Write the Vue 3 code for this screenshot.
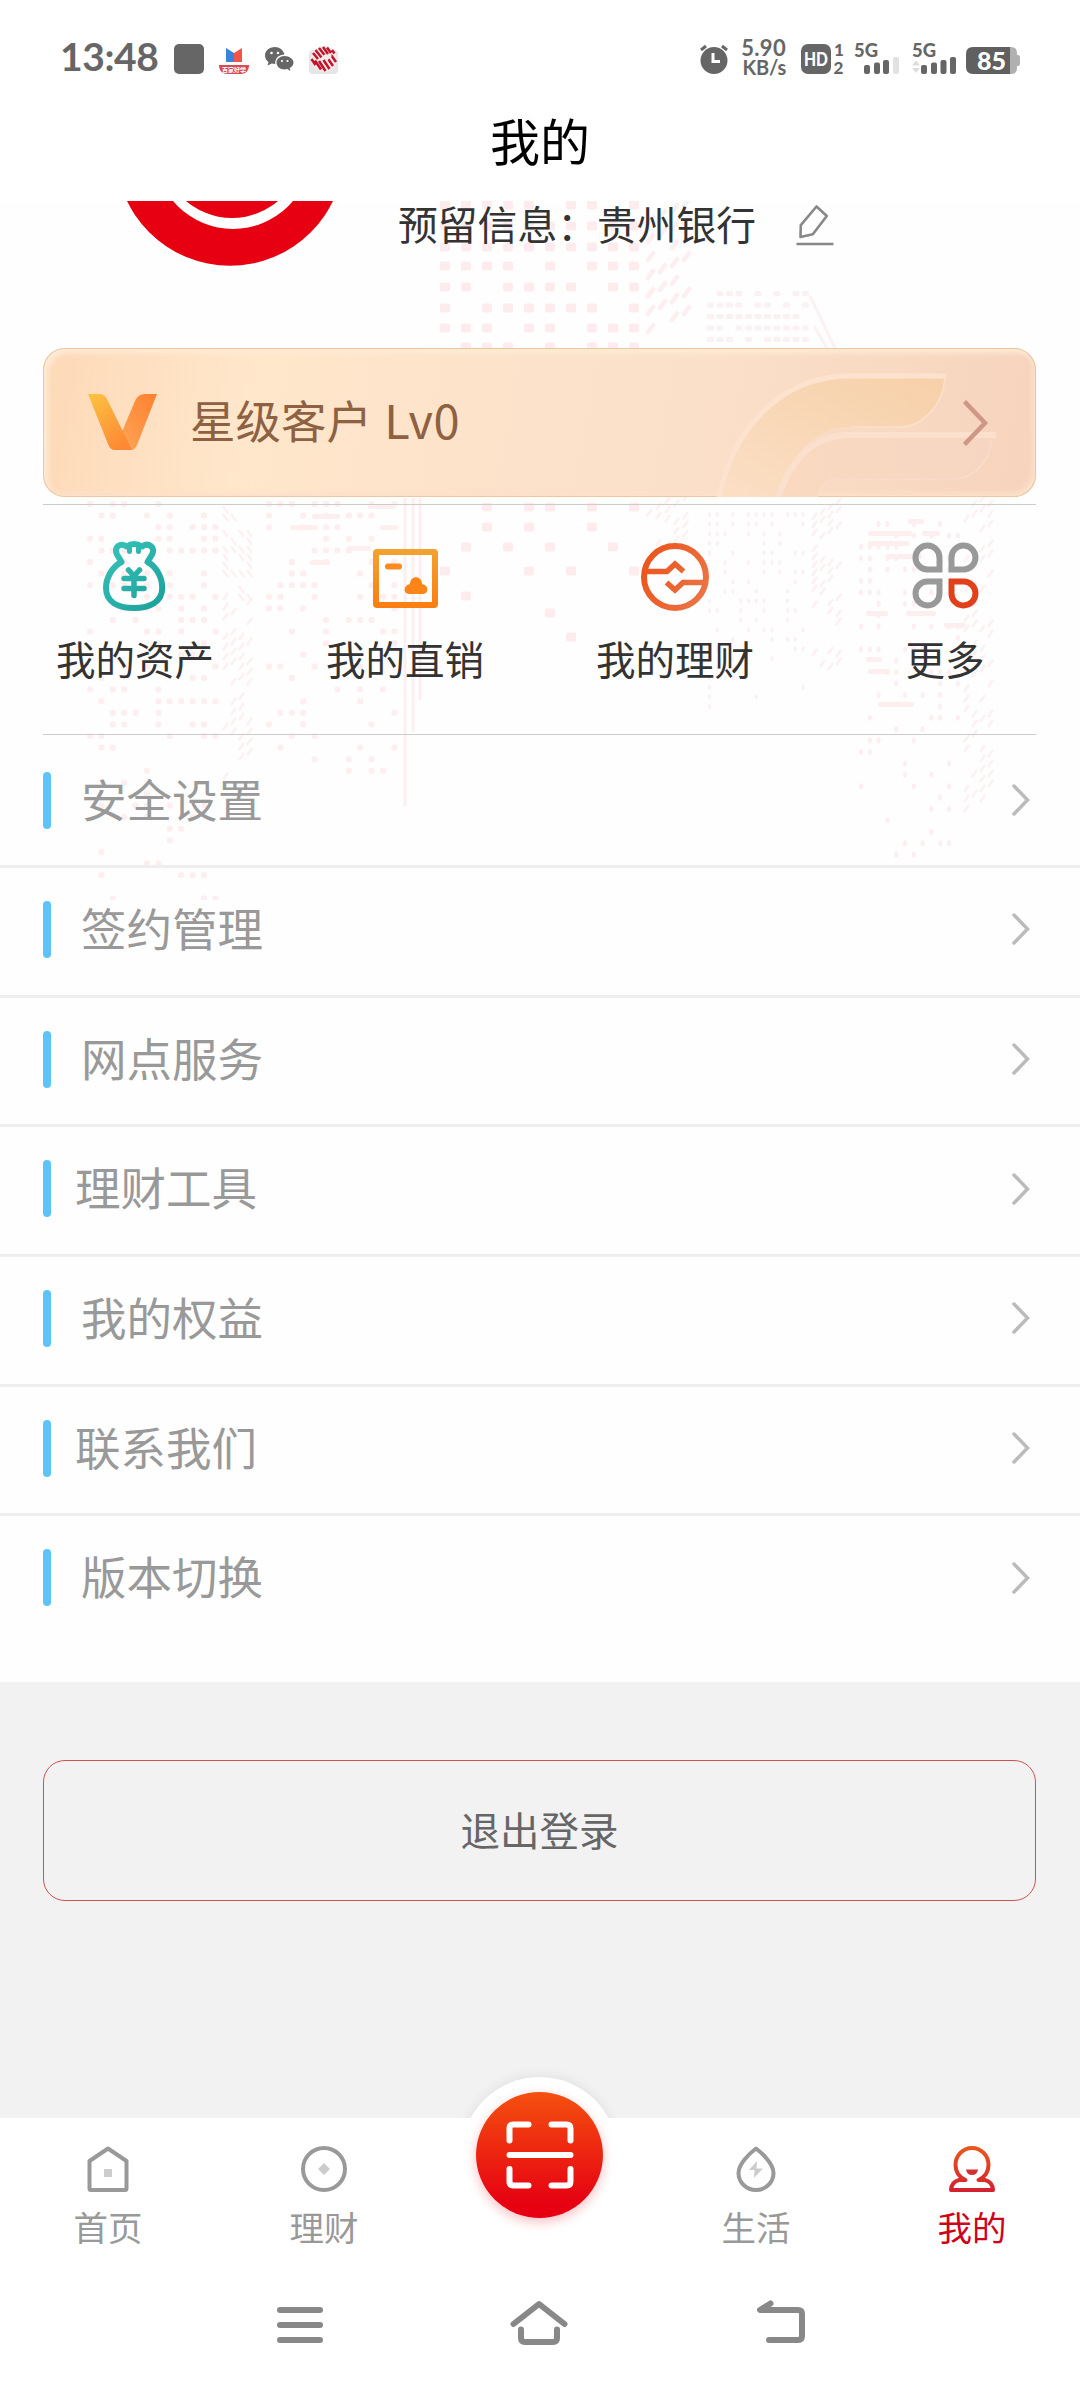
<script setup>
const quick = [
  { key: 'asset', label: '我的资产' },
  { key: 'direct', label: '我的直销' },
  { key: 'wealth', label: '我的理财' },
  { key: 'more', label: '更多' },
]

const menu = [
  { label: '安全设置' },
  { label: '签约管理' },
  { label: '网点服务' },
  { label: '理财工具', tight: true },
  { label: '我的权益' },
  { label: '联系我们', tight: true },
  { label: '版本切换' },
]

const tabs = [
  { key: 'home', label: '首页' },
  { key: 'finance', label: '理财' },
  { key: 'scan', label: '' },
  { key: 'life', label: '生活' },
  { key: 'mine', label: '我的', active: true },
]

// Dotted skyline behind the upper half of the page
let seed = 7
function rnd() {
  seed = (seed * 16807) % 2147483647
  return seed / 2147483647
}

const tower = [
  [205, '1111101101'], [226, '1111111111'], [247, '1111111111'], [266, '1111010111'],
  [287, '1101111011'], [308, '1011111101'], [328, '1110110111'], [347, '0111010111'],
  [507, '0010110101'], [527, '0010100100'], [547, '0101010010'], [571, '1000101001'],
  [596, '0100000000'], [613, '0000010000'], [637, '0000001000'],
]
const bigDots = tower.flatMap(([y, row]) =>
  [...row].map((c, i) => (c === '1' ? { x: 440 + i * 21, y: y - 4.5 } : null)).filter(Boolean))

function grid(x0, x1, dx, y0, y1, dy, top, bottom, w, h) {
  const out = []
  for (let y = y0; y <= y1; y += dy) {
    const p = top + (bottom - top) * ((y - y0) / (y1 - y0))
    for (let x = x0; x <= x1; x += dx) if (rnd() < p) out.push({ x, y, w, h })
  }
  return out
}
const smallDots = [
  ...grid(87, 215, 11.4, 501, 900, 11.6, 0.48, 0.08, 6, 6),
  ...grid(266, 396, 11.4, 501, 812, 11.6, 0.48, 0.06, 6, 6),
  ...grid(859, 958, 8.8, 521, 855, 11.4, 0.42, 0.1, 4, 6),
]
const fineDots = [
  ...grid(707, 803, 9.5, 291, 346, 11.5, 0.8, 0.8, 7, 5),
  ...grid(708, 803, 7.8, 512, 708, 9.6, 0.65, 0.08, 3, 5),
]
const dashes = [
  [312, 514, 28], [290, 525, 28], [347, 546, 24], [310, 560, 20], [368, 504, 28], [380, 525, 18],
  [868, 531, 44], [922, 531, 18], [868, 541, 42], [886, 554, 36], [908, 519, 16], [866, 611, 22],
  [906, 611, 30], [944, 623, 22], [866, 657, 16], [868, 669, 22], [878, 702, 36],
]

function slants(x0, x1, dx, y0, y1, dy, rise, p0, p1) {
  const out = []
  for (let y = y0; y <= y1; y += dy) {
    const p = p0 + (p1 - p0) * ((y - y0) / (y1 - y0))
    for (let x = x0; x <= x1; x += dx) {
      if (rnd() < p) {
        const yy = y + ((x - x0) / dx) * rise
        out.push(`M${x} ${yy}l5 ${rise < 0 ? -7 : 7}`)
      }
    }
  }
  return out.join('')
}
const thickSlants = slants(648, 690, 12, 224, 340, 18, -6, 0.75, 0.75)
const thinSlants =
  slants(647, 690, 9, 516, 562, 9, -6, 0.8, 0.6) +
  slants(223, 250, 8, 506, 590, 8, 8, 0.6, 0.4) + slants(223, 250, 8, 600, 780, 10, -5, 0.6, 0.5) +
  slants(812, 838, 8, 520, 680, 8, -5, 0.7, 0.4) + slants(964, 988, 8, 512, 815, 10, -5, 0.6, 0.5)
</script>

<template>
  <div class="page">
    <svg class="skyline" width="1080" height="900" viewBox="0 0 1080 900" aria-hidden="true">
      <g fill="#fdebed">
        <rect v-for="(d, i) in bigDots" :key="'b' + i" :x="d.x" :y="d.y" width="10" height="9" rx="2" />
      </g>
      <g fill="#fdeff0">
        <rect v-for="(d, i) in smallDots" :key="'s' + i" :x="d.x" :y="d.y" :width="d.w" :height="d.h" rx="2" />
        <rect v-for="(d, i) in dashes" :key="'d' + i" :x="d[0]" :y="d[1]" :width="d[2]" height="5" rx="2" />
      </g>
      <g fill="#fcf1f2">
        <rect v-for="(d, i) in fineDots" :key="'f' + i" :x="d.x" :y="d.y" :width="d.w" :height="d.h" rx="1.5" />
      </g>
      <path :d="thickSlants" stroke="#fdeef0" stroke-width="4.500" stroke-linecap="round" />
      <path :d="thinSlants" stroke="#fdf0f1" stroke-width="2.400" />
      <path d="M810 296l26 54M814 326l14 24" stroke="#fdf2f3" stroke-width="3" />
      <path d="M405 498V806M413 498V732M420 498V700" stroke="#fdeef0" stroke-width="3" />
    </svg>

    <header class="status">
      <span class="clock">13:48</span>
      <i class="square"></i>
      <svg class="s-news" width="30" height="28" viewBox="0 0 30 28">
        <path d="M7 1l8 5v9H7z" fill="#3b82dc" /><path d="M23 1l-8 5v9h8z" fill="#f25447" />
        <path d="M0 18h30c0 5-3 9-8 9H8c-5 0-8-4-8-9z" fill="#d9494d" />
        <text x="15" y="25" text-anchor="middle" font-size="6" font-weight="700" fill="#fff">百家好学</text>
      </svg>
      <svg class="s-chat" width="29" height="25" viewBox="0 0 29 25" fill="#666">
        <path d="M10 0C4 0 0 4 0 8.500c0 3 1.500 5 3.500 6.500L2.500 18.500l4.300-2 3.400.5C10 11 14 7.500 19.500 7.500 18.500 3 14.500 0 10 0z" />
        <path d="M19.500 9C15 9 11.500 12 11.500 15.700s3.500 6.700 8 6.700l2.700-.4 3.300 2-.8-3C27 19.600 28.500 18 28.500 15.700 28.500 12 24.500 9 19.500 9z" />
        <g fill="#fff"><circle cx="6.500" cy="6" r="1.300" /><circle cx="13" cy="6" r="1.300" /><circle cx="17" cy="14" r="1.100" /><circle cx="22.500" cy="14" r="1.100" /></g>
      </svg>
      <svg class="s-bank" width="30" height="28" viewBox="0 0 30 28">
        <rect y="4" width="29" height="24" rx="4" fill="#e6e6e8" />
        <circle cx="15" cy="13" r="13" fill="#f4e9ea" />
        <g stroke="#c0152b" stroke-width="2.500" fill="none">
          <path d="M4 7l5 6M6.500 4l6 7.500M10 2l5.500 7M14 1l5 7M18 1.500l4 5.500M23 4l2.500 3.500" />
          <path d="M2.500 13l4 6M6 14.500l6 9M10 15l6.500 10M14.500 14l6 9M18.500 12l5.500 8M22 9l5 7" />
        </g>
        <path d="M12 14l4-4 2 3 4-4" stroke="#f4e9ea" stroke-width="2.500" fill="none" />
      </svg>

      <svg class="s-alarm" width="30" height="30" viewBox="0 0 30 30">
        <circle cx="15" cy="16.500" r="13.500" fill="#666" />
        <path d="M2 6l5-4M28 6l-5-4" stroke="#666" stroke-width="3" />
        <path d="M14 9v8.500h7" stroke="#fff" stroke-width="3" fill="none" />
      </svg>
      <div class="speed"><span class="num">5.90</span><span class="unit">KB/s</span></div>
      <svg class="s-hd" width="44" height="32" viewBox="0 0 44 32" fill="#666">
        <rect y="1" width="30" height="30" rx="7" />
        <text x="15" y="22.500" text-anchor="middle" font-size="18.500" font-weight="900" fill="#fff" textLength="24" lengthAdjust="spacingAndGlyphs">HD</text>
        <text x="38" y="13" text-anchor="middle" font-size="17" font-weight="900">1</text>
        <text x="37.500" y="30.500" text-anchor="middle" font-size="17" font-weight="900">2</text>
      </svg>
      <svg class="s-sig1" width="46" height="32" viewBox="0 0 46 32" fill="#666">
        <text x="0" y="15" font-size="18" font-weight="900" textLength="24" lengthAdjust="spacingAndGlyphs">5G</text>
        <rect x="10" y="23" width="6" height="9" rx="2" /><rect x="20" y="20.500" width="6" height="11.500" rx="2" />
        <rect x="29" y="18" width="6" height="14" rx="2" /><rect x="39" y="15" width="6" height="17" rx="2" fill="#e2e2e2" />
      </svg>
      <svg class="s-sig2" width="46" height="32" viewBox="0 0 46 32" fill="#666">
        <text x="0" y="15" font-size="18" font-weight="900" textLength="24" lengthAdjust="spacingAndGlyphs">5G</text>
        <path d="M0 23.500l4-5 4 5zM0 26l4 5 4-5z" fill="#ddd" />
        <rect x="9" y="23" width="6" height="9" rx="2" /><rect x="19" y="20.500" width="6" height="11.500" rx="2" />
        <rect x="28.500" y="18" width="6" height="14" rx="2" /><rect x="38" y="15" width="6" height="17" rx="2" />
      </svg>
      <svg class="s-bat" width="54" height="27" viewBox="0 0 54 27">
        <path d="M40 0h5q6 0 6 6v2h1q2 0 2 2v7q0 2-2 2h-1v2q0 6-6 6h-5z" fill="#b0b0b0" />
        <path d="M7 0h37v27H7q-7 0-7-7V7q0-7 7-7z" fill="#606060" />
        <text x="25.500" y="22.500" text-anchor="middle" font-size="24.500" font-weight="900" fill="#fff" textLength="29" lengthAdjust="spacingAndGlyphs">85</text>
      </svg>
    </header>

    <h1 class="title">我的</h1>

    <section class="profile">
      <svg class="avatar" width="210" height="66" viewBox="125 201 210 66">
        <circle cx="230" cy="151.400" r="114.300" fill="#e60012" />
        <circle cx="233" cy="151" r="78" fill="#fff" />
        <circle cx="232" cy="147.300" r="70.700" fill="#e60012" />
      </svg>
      <span class="reserved">预留信息：贵州银行</span>
      <svg class="pencil" width="38" height="42" viewBox="796 204 38 42" fill="none" stroke="#888" stroke-width="2.600">
        <path d="M816.500 206.500l10.300 9.500-14 18.200-12.300 2.700.3-11.800z" stroke-linejoin="round" />
        <path d="M796.500 244h37" />
      </svg>
    </section>

    <section class="level">
      <svg class="level-art" width="993" height="149" viewBox="43 348 993 149">
        <defs>
          <linearGradient id="bandA" x1="0" y1="1" x2="1" y2="0"><stop offset="0" stop-color="#fbdfc5" /><stop offset="1" stop-color="#f6d0a8" /></linearGradient>
          <linearGradient id="bandB" x1="0" y1="0" x2="1" y2="0"><stop offset="0" stop-color="#fad9c0" /><stop offset="1" stop-color="#f6d6c2" /></linearGradient>
        </defs>
        <path d="M719 498C732 430 780 377 850 377H945C943 405 922 427 901 427H850C812 427 789 457 778 498z" fill="url(#bandA)" />
        <path d="M719 498C732 430 780 376 850 376H946" fill="none" stroke="#fde3cf" stroke-width="5" />
        <path d="M945 378C943 405 922 427 901 427H850" fill="none" stroke="#fbe0ca" stroke-width="1.500" />
        <path d="M778 498C791 458 815 436 850 436H991C990 462 974 479 953 479H836Q822 480 817 498z" fill="url(#bandB)" />
        <path d="M778 498C791 458 815 435 850 435H996" fill="none" stroke="#fce0ce" stroke-width="6" />
        <path d="M991 440C990 462 974 479 953 479H836Q822 480 817 498" fill="none" stroke="#fadccb" stroke-width="1.500" />
      </svg>
      <svg class="vee" width="70" height="58" viewBox="0 0 70 58">
        <defs>
          <linearGradient id="va" x1="0" y1="0" x2=".6" y2="1"><stop offset="0" stop-color="#fbc442" /><stop offset="1" stop-color="#ff8a35" /></linearGradient>
          <linearGradient id="vb" x1="1" y1="0" x2="0" y2="1"><stop offset="0" stop-color="#ff7f2e" /><stop offset="1" stop-color="#fca657" /></linearGradient>
        </defs>
        <path d="M69 0H57Q50 0 47 7L33 40l10 16Q47 56 49 51z" fill="url(#vb)" />
        <path d="M0 0H12Q17 0 20 7L44 56H27Q22 56 20 50z" fill="url(#va)" />
      </svg>
      <span class="level-text">星级客户 <b>Lv0</b></span>
      <svg class="level-arrow" width="26" height="46" viewBox="0 0 26 46" fill="none" stroke="#cf9784" stroke-width="4.500"><path d="M1.500 1.500L22 23 1.500 44.500" /></svg>
    </section>

    <nav class="quick">
      <div v-for="q in quick" :key="q.key" class="quick-item">
        <svg v-if="q.key === 'asset'" width="70" height="72" viewBox="100 541 70 72" fill="none" stroke="url(#teal)" stroke-width="6" stroke-linecap="round" stroke-linejoin="round">
          <defs><linearGradient id="teal" gradientUnits="userSpaceOnUse" x1="103" y1="545" x2="165" y2="611"><stop offset="0" stop-color="#37c3ba" /><stop offset="1" stop-color="#1a9f99" /></linearGradient></defs>
          <path d="M121.500 562L117 554.500C113 547 121 542 126.500 546.500 131 543.500 137 543.500 142 546.500 148 542 156 547 152 554.500L147.500 562C157 567 162.200 578 162.200 588 162.200 602 150 608 134 608S106 602 106 588C106 578 112 567 121.500 562z" />
          <path d="M129.500 548v3.500M138.500 548v3.500" stroke-width="5" />
          <path d="M128.500 570l5.500 6 5.500-6M124 578.500h20M124 588.500h20M134 577v18.500" stroke-width="5.500" />
        </svg>
        <svg v-else-if="q.key === 'direct'" width="70" height="72" viewBox="370 541 70 72">
          <defs><linearGradient id="amber" gradientUnits="userSpaceOnUse" x1="0" y1="549" x2="0" y2="608"><stop offset="0" stop-color="#f2a331" /><stop offset="1" stop-color="#fb7d11" /></linearGradient></defs>
          <rect x="376" y="552" width="59" height="53" rx="1" fill="none" stroke="url(#amber)" stroke-width="6" />
          <rect x="385" y="563.500" width="17" height="6" rx="3" fill="#fa8b20" />
          <path d="M409 594c-6 0-6-9 1-10 0-9 12-9 12 0 7 1 7 10 1 10z" fill="#fc8418" />
        </svg>
        <svg v-else-if="q.key === 'wealth'" width="70" height="72" viewBox="639 541 70 72" fill="none" stroke="url(#orange)" stroke-width="6">
          <defs><linearGradient id="orange" gradientUnits="userSpaceOnUse" x1="645" y1="565" x2="705" y2="595"><stop offset="0" stop-color="#ec561f" /><stop offset="1" stop-color="#eb7445" /></linearGradient></defs>
          <circle cx="674" cy="577" r="31" />
          <path d="M645 571.500h21l8-7.500 8.500 7.500M703 582.500h-21l-8 7.500-8.500-7.500" stroke-width="5.500" />
        </svg>
        <svg v-else width="70" height="72" viewBox="910 541 70 72" fill="none" stroke="#999" stroke-width="6">
          <path d="M939.500 569.500H928A12 12 0 1 1 939.500 558z" />
          <path d="M951.500 569.500H963A12 12 0 1 0 951.500 558z" />
          <path d="M939.500 581.500H928A12 12 0 1 0 939.500 593z" />
          <path d="M951.500 581.500H963A12 12 0 1 1 951.500 593z" stroke="#e2401b" />
        </svg>
        <span>{{ q.label }}</span>
      </div>
    </nav>

    <ul class="menu">
      <li v-for="m in menu" :key="m.label" :class="{ tight: m.tight }">
        <i></i>
        <span>{{ m.label }}</span>
        <svg width="20" height="34" viewBox="0 0 20 34" fill="none" stroke="#bbb" stroke-width="3.500" stroke-linecap="round"><path d="M3 3l13.500 14L3 31" /></svg>
      </li>
    </ul>

    <main class="rest"><button class="logout">退出登录</button></main>

    <footer class="tabs">
      <div class="halo"></div>
      <div v-for="t in tabs" :key="t.key" class="tab" :class="{ active: t.active }">
        <svg v-if="t.key === 'home'" width="50" height="50" viewBox="0 0 50 50" fill="none" stroke="#999" stroke-width="4" stroke-linejoin="round">
          <path d="M25 4.500L43.500 17V44.500Q43.500 46 42 46H8Q6.500 46 6.500 44.500V17z" /><rect x="21" y="25" width="8" height="8" fill="#ccc" stroke="none" />
        </svg>
        <svg v-else-if="t.key === 'finance'" width="50" height="50" viewBox="0 0 50 50">
          <circle cx="25" cy="25" r="21" fill="none" stroke="#999" stroke-width="4" /><path d="M25 19l6 6-6 6-6-6z" fill="#ccc" />
        </svg>
        <svg v-else-if="t.key === 'life'" width="50" height="50" viewBox="0 0 50 50" fill="none" stroke="#999" stroke-width="4" stroke-linejoin="round">
          <path d="M25 4.500C19 9 7.500 20 7.500 29a17.500 17 0 0 0 35 0C42.500 20 31 9 25 4.500z" /><path d="M26 17l-8 9h5.500l-.5 8 9-9.500h-6.500z" fill="#ccc" stroke="none" />
        </svg>
        <svg v-else-if="t.key === 'mine'" width="50" height="50" viewBox="0 0 50 50" fill="none" stroke="url(#mine)" stroke-width="4" stroke-linejoin="round">
          <defs><linearGradient id="mine" gradientUnits="userSpaceOnUse" x1="0" y1="2" x2="0" y2="48"><stop offset="0" stop-color="#e9591c" /><stop offset="1" stop-color="#d32030" /></linearGradient></defs>
          <path d="M18.500 36C12 33 8.500 27.500 8.500 21a16.500 17 0 0 1 33 0C41.500 27.500 38 33 31.500 36H38Q45.500 38 46 46H4Q4.500 38 12 36z" />
          <path d="M19 25.500h12q-1 5.500-6 5.500t-6-5.500z" fill="#d33130" stroke="none" />
        </svg>
        <span v-if="t.label">{{ t.label }}</span>
        <div v-if="t.key === 'scan'" class="scan">
          <svg width="68" height="68" viewBox="0 0 68 68" fill="none" stroke="#fff" stroke-width="6" stroke-linecap="round" stroke-linejoin="round">
            <path d="M22.500 3.500H7.500Q3.500 3.500 3.500 7.500V19.500M45.500 3.500H60.500Q64.500 3.500 64.500 7.500V19.500M3.500 48V60.500Q3.500 64.500 7.500 64.500H22.500M64.500 48V60.500Q64.500 64.500 60.500 64.500H45.500M3.500 34H64.500" />
          </svg>
        </div>
      </div>
    </footer>

    <div class="keys">
      <svg width="50" height="50" viewBox="275 2300 50 50"><path d="M280 2310h40M280 2325h40M280 2340h40" /></svg>
      <svg width="64" height="50" viewBox="508 2295 64 50"><path d="M514.500 2322L540 2302 565.500 2322M522 2327.500v8.500q0 4 4 4h28q4 0 4-4v-8.500" /></svg>
      <svg width="56" height="50" viewBox="752 2298 56 50"><path d="M769.500 2303.500L759 2310H797Q801 2310 801 2314V2336Q801 2340 797 2340H768" /></svg>
    </div>
  </div>
</template>

<style>
body { margin: 0; background: #fff; }
</style>

<style scoped>
.page {
  position: relative;
  display: flex;
  flex-direction: column;
  width: 1080px;
  height: 2388px;
  overflow: hidden;
  background: #fefefe;
  font-family: "Noto Sans CJK SC", "Noto Sans", sans-serif;
}
.page > * { position: relative; box-sizing: border-box; flex: none; }
.page > .skyline { position: absolute; left: 0; top: 0; }
.skyline path { fill: none; }

.status { display: flex; align-items: flex-start; height: 84px; padding-left: 61px; background: #fff; font-family: Lato, sans-serif; color: #666; }
.status > * { flex: none; }
.status svg { overflow: visible; }
.clock { width: 113px; margin: 33px 0 0 -1px; font-size: 39px; line-height: 46px; font-weight: 700; letter-spacing: -.4px; }
.square { width: 30px; height: 30px; margin: 44px 0 0 1px; border-radius: 5px; background: #666; }
.s-news { margin: 47px 0 0 15px; font-family: "Noto Sans CJK SC", sans-serif; }
.s-chat { margin: 47px 0 0 16px; }
.s-bank { margin: 46px 0 0 15px; }
.s-alarm { margin: 44px 0 0 360px; }
.speed { display: flex; flex-direction: column; width: 48px; margin: 37px 0 0 9px; text-align: right; font-weight: 700; }
.num { font-size: 22px; line-height: 21px; letter-spacing: .3px; }
.unit { font-size: 20px; line-height: 19px; letter-spacing: -.2px; }
.s-hd { margin: 43px 0 0 15px; }
.s-sig1 { margin: 42px 0 0 9px; }
.s-sig2 { margin: 42px 0 0 12px; }
.s-bat { margin: 47px 0 0 8px; }

.title { height: 117px; margin: 0; text-align: center; font-size: 50px; font-weight: 400; line-height: 111px; color: #000; background: #fff; }

.profile { display: flex; height: 147px; padding-left: 125px; }
.avatar { margin-right: 63px; }
.reserved { width: 398px; margin-top: 1px; font-size: 39.800px; line-height: 42px; color: #333; white-space: nowrap; }
.pencil { margin-top: 3px; }

.level {
  display: flex;
  align-items: center;
  width: 993px;
  height: 149px;
  margin: 0 0 7px 43px;
  padding-left: 45px;
  border-radius: 22px;
  overflow: hidden;
  background: linear-gradient(100deg, #fdd9b7 0%, #ffe7cb 21%, #fce3ca 42%, #fbe0c9 65%, #f8d9c2 84%, #f6d3bd 100%);
  box-shadow: inset 0 0 0 1px #ecc79f, inset 4px 4px 5px 1px #ffebd6, inset -4px -4px 5px #fde0cb;
}
.level-art { position: absolute; left: 0; top: 0; }
.vee, .level-text, .level-arrow { position: relative; }
.level-text { margin: -7px auto 0 32px; font-size: 45.500px; line-height: 60px; color: #8d6141; }
.level-text b { margin-left: 2px; font-size: 47px; font-weight: 400; letter-spacing: .6px; }
.level-arrow { margin-right: 47px; }

.quick { display: flex; height: 231px; }
.quick::before, .quick::after { content: ""; position: absolute; left: 43px; width: 993px; height: 1px; background: #ccc; }
.quick::before { top: 0; }
.quick::after { bottom: 0; }
.quick-item { display: flex; flex-direction: column; align-items: center; width: 270px; padding-top: 37px; }
.quick-item span { margin-top: 21px; font-size: 39.500px; line-height: 48px; color: #333; }

.menu { margin: 0; padding: 0; list-style: none; height: 947px; }
.menu li { display: flex; align-items: center; box-sizing: border-box; height: 129.700px; padding: 0 49px 4px 43px; border-bottom: 3px solid #eee; }
.menu li:first-child { height: 133px; padding-bottom: 0; }
.menu li:last-child { border-bottom: 0; padding-bottom: 7px; }
.menu i { width: 8px; height: 57px; border-radius: 4px; background: #5cc4f8; }
.menu span { flex: 1; margin: -5px 0 0 30px; font-size: 45.500px; line-height: 60px; color: #999; }
.menu .tight span { margin-left: 24px; }

.rest { height: 436px; padding: 78px 44px 0 43px; background: #f2f2f2; }
.logout { display: block; width: 100%; height: 141px; padding: 0 0 5px; border: 1.500px solid #cf5353; border-radius: 22px; background: transparent; font: 39.500px "Noto Sans CJK SC", sans-serif; color: #666; }

.tabs { display: flex; height: 150px; background: #fff; }
.halo { position: absolute; left: 50%; top: -41px; width: 157px; height: 157px; margin-left: -79px; border-radius: 50%; background: #fff; box-shadow: 0 -2px 12px rgba(0, 0, 0, .07); clip-path: inset(-20px -20px 116px -20px); }
.tab { position: relative; display: flex; flex-direction: column; align-items: center; width: 216px; padding-top: 26px; box-sizing: border-box; }
.tab span { margin-top: 10px; font-size: 34.500px; line-height: 44px; color: #999; }
.tab.active span { color: #d0021b; }
.scan { position: absolute; top: -26px; left: 44px; display: flex; align-items: center; justify-content: center; width: 127px; height: 126px; border-radius: 50%; background: linear-gradient(#f4500f, #e60012 90%); box-shadow: 0 4px 12px rgba(230, 0, 18, .25); }

.keys { display: flex; justify-content: center; gap: 182px; height: 120px; padding: 30px 0 0 3px; background: #fff; }
.keys path { fill: none; stroke: #888; stroke-width: 6; stroke-linecap: round; stroke-linejoin: round; }
.keys svg:nth-child(1) { margin-top: 2px; }
.keys svg:nth-child(2) { margin-top: -1px; }
</style>
